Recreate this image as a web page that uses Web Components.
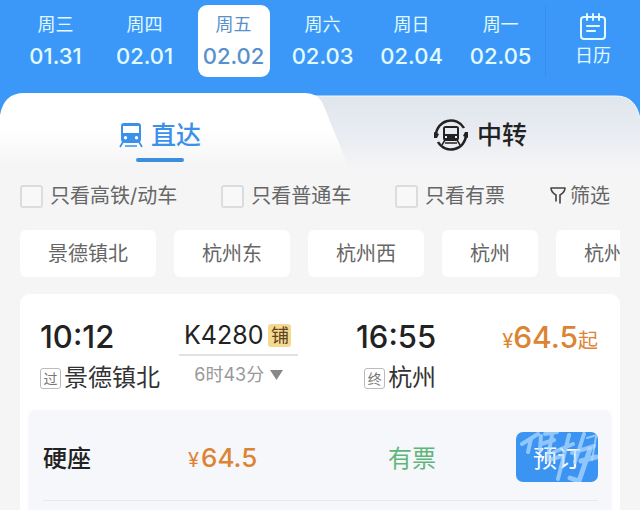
<!DOCTYPE html>
<html lang="zh-CN">
<head>
<meta charset="UTF-8">
<meta name="viewport" content="width=device-width, initial-scale=1">
<title>车票查询</title>
<style>
  body {
    margin: 0;
    min-height: 100vh;
    display: flex;
    flex-direction: column;
    background: #f5f5f6;
    color: #222;
    font-family: Inter, "Noto Sans CJK SC", sans-serif;
  }
  ticket-card {flex: 1;}
</style>
</head>
<body>

<date-bar>
  <day-item week="周三" date="01.31"></day-item>
  <day-item week="周四" date="02.01"></day-item>
  <day-item week="周五" date="02.02" selected></day-item>
  <day-item week="周六" date="02.03"></day-item>
  <day-item week="周日" date="02.04"></day-item>
  <day-item week="周一" date="02.05"></day-item>
</date-bar>

<route-tabs></route-tabs>

<filter-bar>
  <check-option>只看高铁/动车</check-option>
  <check-option>只看普通车</check-option>
  <check-option>只看有票</check-option>
</filter-bar>

<station-list>
  <station-chip>景德镇北</station-chip>
  <station-chip>杭州东</station-chip>
  <station-chip>杭州西</station-chip>
  <station-chip>杭州</station-chip>
  <station-chip>杭州</station-chip>
</station-list>

<ticket-card number="K4280" duration="6时43分" price="64.5">
  <train-stop slot="from" time="10:12" tag="过">景德镇北</train-stop>
  <train-stop slot="to" time="16:55" tag="终">杭州</train-stop>
  <seat-row price="64.5" state="有票">硬座</seat-row>
</ticket-card>

<script>
/* ===== <date-bar> ===== */
class DateBar extends HTMLElement {
  constructor(){
    super();
    this.attachShadow({mode:'open'});
    this.shadowRoot.innerHTML = `
      <style>
        :host{display:flex;align-items:stretch;background:#3c98f8;color:#e2fbff;
              padding:5px 0 16px 11px;}
        .days{flex:535;display:grid;grid-template-columns:repeat(6,1fr);justify-items:center;}
        .calendar{flex:94;display:flex;flex-direction:column;align-items:center;
                  padding:8px 0 0;border:0;border-left:1px solid #3a8eea;background:none;
                  color:inherit;font:18px/26px Inter,"Noto Sans CJK SC",sans-serif;}
        svg{display:block;width:28px;height:28px;margin-bottom:2px;}
      </style>
      <div class="days"><slot></slot></div>
      <button class="calendar">
        <svg viewBox="0 0 28 28" fill="none" stroke="currentColor" stroke-width="2" stroke-linecap="round">
          <rect x="2" y="4" width="24" height="22" rx="3"/>
          <path d="M8 1v6M14 1v6M20 1v6M8 13h12M8 18h8"/>
        </svg>
        日历
      </button>`;
  }
}
customElements.define('date-bar', DateBar);

/* ===== <day-item> ===== */
class DayItem extends HTMLElement {
  constructor(){
    super();
    this.attachShadow({mode:'open'});
  }
  connectedCallback(){
    this.shadowRoot.innerHTML = `
      <style>
        :host{display:block;}
        button{display:flex;flex-direction:column;align-items:center;width:72px;height:72px;
               padding:6px 0 4px;border:0;border-radius:9px;background:none;color:inherit;
               font:18px/28px Inter,"Noto Sans CJK SC",sans-serif;}
        .date{font-size:22px;line-height:34px;font-weight:500;}
        :host([selected]) button{background:#fff;color:#5790cb;}
      </style>
      <button>
        <span>${this.getAttribute('week')}</span>
        <span class="date">${this.getAttribute('date')}</span>
      </button>`;
  }
}
customElements.define('day-item', DayItem);

/* ===== <route-tabs> ===== */
class RouteTabs extends HTMLElement {
  constructor(){
    super();
    this.attachShadow({mode:'open'});
    this.shadowRoot.innerHTML = `
      <style>
        :host{display:grid;grid-template-columns:1fr 1fr;position:relative;height:80px;
              background:linear-gradient(#3c98f8 40px,#f5f5f6 40px);}
        .shape{position:absolute;inset:0;width:100%;height:100%;}
        button{position:relative;display:flex;flex-direction:column;align-items:center;
               padding:23px 0 0;border:0;background:none;color:#222;
               font:500 25px/38px Inter,"Noto Sans CJK SC",sans-serif;}
        .label{display:flex;align-items:center;gap:8px;}
        .on{color:#3b91ea;}
        .on::after{content:"";width:48px;height:4px;margin-top:4px;border-radius:2px;background:#3c8fdf;}
        .bus{width:24px;height:26px;}
        .ring{width:36px;height:36px;}
      </style>
      <svg class="shape" viewBox="0 0 640 80" preserveAspectRatio="none">
        <defs>
          <linearGradient id="a" x1="0" y1="0" x2="0" y2="1">
            <stop offset=".45" stop-color="#fff"/><stop offset=".9" stop-color="#f5f5f6"/>
          </linearGradient>
          <linearGradient id="b" x1="0" y1="0" x2="0" y2="1">
            <stop offset="0" stop-color="#e0e6ed"/><stop offset=".5" stop-color="#e9ecf2"/>
            <stop offset=".95" stop-color="#f5f5f6"/>
          </linearGradient>
        </defs>
        <path d="M290 3H616Q636 3 640 26V80H290Z" fill="url(#b)"/>
        <path d="M290 3H616Q636 3 640 26" fill="none" stroke="#f2f7fc" stroke-width="1"/>
        <path d="M0 80V22Q4 0 24 0H305Q318 0 323 11L351 80Z" fill="url(#a)"/>
      </svg>
      <button class="on">
        <span class="label">
          <svg class="bus" viewBox="0 0 24 26">
            <path fill="currentColor" fill-rule="evenodd" d="M5 1H19Q22 1 22 4V17Q22 21 18 21H6Q2 21 2 17V4Q2 1 5 1ZM4 4V11H20V4ZM6.500 14A1.700 1.700 0 1 0 6.500 17.400A1.700 1.700 0 1 0 6.500 14ZM17.500 14A1.700 1.700 0 1 0 17.500 17.400A1.700 1.700 0 1 0 17.500 14Z"/>
            <path d="M4 20L1 25M20 20L23 25M6 24H18" fill="none" stroke="currentColor" stroke-width="1.700"/>
          </svg>
          直达
        </span>
      </button>
      <button>
        <span class="label">
          <svg class="ring" viewBox="0 0 36 36">
            <g fill="none" stroke="currentColor" stroke-width="2.500">
              <path d="M3 18A15 15 0 0 1 31 11"/>
              <path d="M33 18A15 15 0 0 1 5 25"/>
            </g>
            <path d="M1 15L6 17L4 21L1 21ZM35 21L30 19L32 15L35 15Z" fill="currentColor"/>
            <path fill="currentColor" fill-rule="evenodd" d="M12.500 9H23.500Q26 9 26 11.500V21Q26 24 23 24H13Q10 24 10 21V11.500Q10 9 12.500 9ZM12 11V17H24V11ZM12 19V21H14V19ZM22 19V21H24V19Z"/>
            <path d="M12 23L9 28M24 23L27 28M12 26H24" fill="none" stroke="currentColor" stroke-width="1.500"/>
          </svg>
          中转
        </span>
      </button>`;
  }
}
customElements.define('route-tabs', RouteTabs);

/* ===== <filter-bar> ===== */
class FilterBar extends HTMLElement {
  constructor(){
    super();
    this.attachShadow({mode:'open'});
    this.shadowRoot.innerHTML = `
      <style>
        :host{display:flex;align-items:center;justify-content:space-between;
              padding:7px 30px 0 20px;color:#666;}
        button{display:flex;align-items:center;gap:3px;padding:0;border:0;background:none;
               color:inherit;font:20px/32px Inter,"Noto Sans CJK SC",sans-serif;}
        svg{width:18px;height:20px;}
      </style>
      <slot></slot>
      <button>
        <svg viewBox="0 0 18 20" fill="none" stroke="#444" stroke-width="1.600" stroke-linejoin="round" stroke-linecap="round">
          <path d="M11 17V9Q16 6 16 2H2Q2 6 7 9V15"/>
        </svg>
        筛选
      </button>`;
  }
}
customElements.define('filter-bar', FilterBar);

/* ===== <check-option> ===== */
class CheckOption extends HTMLElement {
  constructor(){
    super();
    this.attachShadow({mode:'open'});
    this.shadowRoot.innerHTML = `
      <style>
        :host{display:block;}
        label{display:flex;align-items:center;gap:7px;font-size:20px;line-height:32px;}
        input{appearance:none;width:23px;height:23px;margin:0;border:2px solid #dcdcdd;
              border-radius:3px;background:#f8f8f8;}
        input:checked{background:#3c98f8;}
      </style>
      <label><input type="checkbox"><span><slot></slot></span></label>`;
  }
}
customElements.define('check-option', CheckOption);

/* ===== <station-list> / <station-chip> ===== */
class StationList extends HTMLElement {
  constructor(){
    super();
    this.attachShadow({mode:'open'});
    this.shadowRoot.innerHTML = `
      <style>
        :host{display:flex;gap:18px;margin:18px 20px 17px;overflow:hidden;}
      </style>
      <slot></slot>`;
  }
}
customElements.define('station-list', StationList);

class StationChip extends HTMLElement {
  constructor(){
    super();
    this.attachShadow({mode:'open'});
    this.shadowRoot.innerHTML = `
      <style>
        :host{display:block;flex:none;}
        button{padding:9px 28px 7px;border:0;border-radius:6px;background:#fff;color:#666;
               white-space:nowrap;font:20px/31px Inter,"Noto Sans CJK SC",sans-serif;}
      </style>
      <button><slot></slot></button>`;
  }
}
customElements.define('station-chip', StationChip);

/* ===== <ticket-card> ===== */
class TicketCard extends HTMLElement {
  constructor(){
    super();
    this.attachShadow({mode:'open'});
  }
  connectedCallback(){
    this.shadowRoot.innerHTML = `
      <style>
        :host{display:flex;flex-direction:column;margin:0 20px;border-radius:10px 10px 0 0;background:#fff;}
        .top{display:grid;grid-template-columns:139fr 177fr 242fr;padding:22px 22px 14px 20px;}
        .train{justify-self:start;text-align:center;}
        .number{display:flex;align-items:center;gap:5px;padding:0 7px 0 5px;height:38px;
                border-bottom:2px solid #e2e2e2;font-size:25px;line-height:36px;}
        .sleeper{border-radius:3px;background:#f6d990;color:#5b431d;width:23px;
                 font-size:18px;line-height:23px;}
        .duration{display:flex;align-items:center;justify-content:center;gap:6px;
                  padding:1px 0 0;border:0;width:100%;background:none;color:#999;
                  font:18px/36px Inter,"Noto Sans CJK SC",sans-serif;}
        .duration svg{width:13px;height:10px;}
        .right{display:flex;justify-content:space-between;align-items:flex-start;}
        .price{display:flex;align-items:baseline;color:#dc8434;font-size:20px;line-height:38px;
               padding-top:2px;}
        .price b{font-size:30px;font-weight:500;}
        .seats{flex:1;margin:0 8px;padding:0 14px 0 15px;border-radius:8px 8px 0 0;background:#f6f7fb;}
      </style>
      <div class="top">
        <slot name="from"></slot>
        <div class="train">
          <div class="number">${this.getAttribute('number')}<span class="sleeper">铺</span></div>
          <button class="duration">${this.getAttribute('duration')}
            <svg viewBox="0 0 13 10"><path d="M0 0H13L6.500 10Z" fill="#888"/></svg>
          </button>
        </div>
        <div class="right">
          <slot name="to"></slot>
          <div class="price">¥<b>${this.getAttribute('price')}</b>起</div>
        </div>
      </div>
      <div class="seats"><slot></slot></div>`;
  }
}
customElements.define('ticket-card', TicketCard);

/* ===== <train-stop> ===== */
class TrainStop extends HTMLElement {
  constructor(){
    super();
    this.attachShadow({mode:'open'});
  }
  connectedCallback(){
    this.shadowRoot.innerHTML = `
      <style>
        :host{display:block;white-space:nowrap;}
        .time{font-size:31px;line-height:42px;font-weight:500;}
        .name{display:flex;align-items:center;gap:3px;margin-top:2px;
              font-size:24px;line-height:36px;color:#333;}
        .tag{box-sizing:border-box;width:21px;height:21px;border:1px solid #bbb;border-radius:3px;
             color:#777;font-size:14px;line-height:19px;text-align:center;}
        :host([slot="to"]) .name{justify-content:flex-end;}
      </style>
      <div class="time">${this.getAttribute('time')}</div>
      <div class="name"><span class="tag">${this.getAttribute('tag')}</span><slot></slot></div>`;
  }
}
customElements.define('train-stop', TrainStop);

/* ===== <seat-row> ===== */
class SeatRow extends HTMLElement {
  constructor(){
    super();
    this.attachShadow({mode:'open'});
  }
  connectedCallback(){
    this.shadowRoot.innerHTML = `
      <style>
        :host{display:grid;grid-template-columns:145fr 200fr 210fr;align-items:center;
              padding:22px 0 18px;border-bottom:1px solid #e6e8ee;font-size:24px;line-height:36px;}
        .seat{font-weight:500;}
        .seat,.price,.state{padding-top:3px;}
        .price{display:flex;align-items:baseline;gap:2px;color:#dc8434;font-size:20px;}
        .price b{font-size:26px;font-weight:500;}
        .right{display:flex;align-items:center;justify-content:space-between;}
        .state{color:#5fb67a;}
        button{position:relative;overflow:hidden;width:82px;height:50px;padding:3px 0 0;border:0;
               border-radius:7px;background:#3b94f2;
               color:#fff;font:24px/36px Inter,"Noto Sans CJK SC",sans-serif;}
        .brush{position:absolute;inset:0;width:100%;height:100%;pointer-events:none;}
      </style>
      <span class="seat"><slot></slot></span>
      <span class="price">¥<b>${this.getAttribute('price')}</b></span>
      <div class="right">
        <span class="state">${this.getAttribute('state')}</span>
        <button>
          <svg class="brush" viewBox="0 0 82 50" fill="none" stroke="#b5dbff" stroke-opacity=".7" stroke-linecap="round">
            <path stroke-width="4" d="M6 12L22 2M15 7L12 20M25 4L24 18M29 2L41 0M36 3L32 24M25 12L38 8"/>
            <path stroke-width="4" d="M53 3L42 47M38 20L57 12M33 28L46 24M68 2L59 30M56 21L78 14"/>
            <path stroke-width="5" d="M74 17L63 49L54 46M65 29L80 25"/>
            <path stroke-width="2" d="M80 5L76 28M71 6L81 3"/>
          </svg>
          预订
        </button>
      </div>`;
  }
}
customElements.define('seat-row', SeatRow);
</script>
</body>
</html>
